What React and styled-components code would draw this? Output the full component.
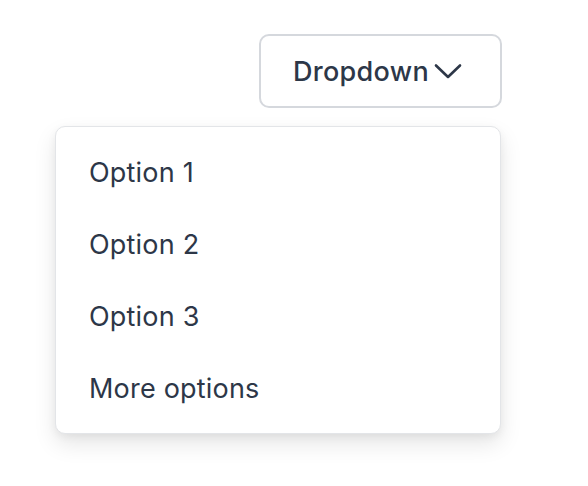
import React from 'react'
import styled, { createGlobalStyle } from 'styled-components'

const Global = createGlobalStyle`
  html, body {
    margin: 0;
    background: #ffffff;
    font-family: Inter, "Noto Sans", sans-serif;
  }
`

const Page = styled.div`
  width: 588px;
  height: 486px;
  box-sizing: border-box;
  padding: 34px 86px 0 0;
  display: flex;
  justify-content: flex-end;
  align-items: flex-start;
`

const Wrapper = styled.div`
  position: relative;
`

const Toggle = styled.button`
  display: flex;
  align-items: center;
  gap: 5px;
  box-sizing: border-box;
  width: 243px;
  height: 74px;
  padding: 0 0 0 32px;
  background: #fff;
  border: 2px solid #d5d8dd;
  border-radius: 10px;
  font-family: Inter, "Noto Sans", sans-serif;
  font-size: 27px;
  letter-spacing: 0.3px;
  font-weight: 500;
  color: #2d3748;
  cursor: pointer;
`

const Menu = styled.ul`
  position: absolute;
  top: calc(100% + 18px);
  right: 1px;
  width: 446px;
  box-sizing: border-box;
  margin: 0;
  padding: 9px 0;
  list-style: none;
  background: #fff;
  border: 1px solid #e3e5e8;
  border-radius: 10px;
  box-shadow: 0 10px 22px rgba(0, 0, 0, 0.1), 0 3px 8px rgba(0, 0, 0, 0.05);
`

const Item = styled.li`
  height: 72px;
  display: flex;
  align-items: center;
  padding: 0 33px;
  font-size: 27px;
  letter-spacing: 0.2px;
  font-weight: 400;
  color: #2d3748;
`

const Chevron = () => (
  <svg width="28" height="16" viewBox="0 0 28 16" fill="none">
    <path d="M2 2.5 L14 14 L26 2.5" stroke="#2d3748" strokeWidth="2.6" strokeLinecap="round" strokeLinejoin="round" />
  </svg>
)

const options = ['Option 1', 'Option 2', 'Option 3', 'More options']

export default function App() {
  return (
    <>
      <Global />
      <Page>
        <Wrapper>
          <Toggle>
            Dropdown
            <Chevron />
          </Toggle>
          <Menu>
            {options.map((o) => (
              <Item key={o}>{o}</Item>
            ))}
          </Menu>
        </Wrapper>
      </Page>
    </>
  )
}
